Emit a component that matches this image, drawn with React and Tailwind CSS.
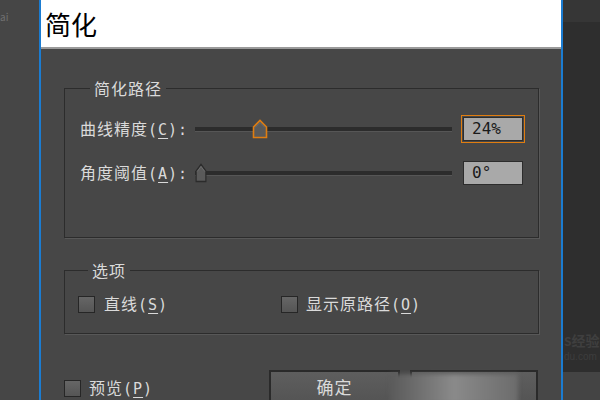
import React from "react";

const cjk = { fontFamily: '"Noto Sans CJK SC", "Noto Sans", sans-serif' };
const mono = { fontFamily: '"DejaVu Sans Mono", "Liberation Mono", monospace' };

function Thumb({ active, w = 16 }) {
  return (
    <svg width={w} height="20" viewBox="0 0 16 20" preserveAspectRatio="none" className="block">
      <path
        d="M1.5 8 L8 1.5 L14.5 8 L14.5 18.5 L1.5 18.5 Z"
        fill="#5a5a5a"
        stroke={active ? "#e07d10" : "#2b2b2b"}
        strokeWidth="1.6"
      />
      <path d="M3 8.5 L8 3.5 L13 8.5" fill="none" stroke="#6e6e6e" strokeWidth="1" />
    </svg>
  );
}

function Slider({ pos, active, w }) {
  return (
    <div className="relative w-[257px] h-[28px] flex items-center">
      <div className="w-full h-[5px] bg-[#2c2c2c] border-b border-[#565656]" />
      <div className="absolute top-[4px]" style={{ left: pos }}>
        <Thumb active={active} w={w} />
      </div>
    </div>
  );
}

function ValueBox({ value, focused }) {
  return (
    <div
      className={`w-[64px] h-[28px] p-[1px] ${
        focused ? "border border-[#e07d10]" : "border border-transparent"
      }`}
    >
      <div
        className="w-full h-full bg-[#a9a9a9] border border-[#2c2c2c] flex items-center pl-[8px] text-[16px] text-[#1a1a1a]"
        style={mono}
      >
        {value}
      </div>
    </div>
  );
}

function Check() {
  return (
    <div className="w-[17px] h-[17px] border border-[#262626] bg-gradient-to-b from-[#666] to-[#555] shrink-0" />
  );
}

function Key({ k, colon }) {
  return (
    <span style={mono} className="text-[15px]">
      (<span className="underline underline-offset-[3px]">{k}</span>){colon ? ":" : ""}
    </span>
  );
}

export default function App() {
  return (
    <div
      className="w-[600px] h-[400px] flex bg-[#464646] overflow-hidden text-[#dadada]"
      style={cjk}
    >
      {/* left workspace strip */}
      <div className="w-[39px] shrink-0">
        <div className="text-[10px] text-[#707070] mt-[9px] ml-0">ai</div>
      </div>
      <div className="w-[2px] shrink-0 bg-[#1b7cd1]" />

      {/* dialog */}
      <div className="w-[520px] shrink-0 flex flex-col bg-[#474747]">
        <div className="h-[49px] shrink-0 bg-white border-b-2 border-[#9a9a9a] flex items-center pl-[4px] pt-[1px]">
          <span className="text-[26px] leading-none text-black">简化</span>
        </div>

        <div className="pl-[23px] pr-[22px] pt-[29px]">
          <fieldset className="border border-[#2c2c2c] shadow-[1px_1px_0_#585858] h-[160px] pl-[15px] pr-[13px] pt-[17px]">
            <legend className="ml-[10px] px-[4px] text-[16px] leading-[20px] tracking-[1px]">简化路径</legend>
            <div className="flex items-center h-[28px]">
              <div className="w-[115px] text-[16px] leading-none tracking-[1px] whitespace-nowrap">
                曲线精度<Key k="C" colon />
              </div>
              <Slider pos={57} active />
              <div className="ml-[9px]">
                <ValueBox value="24%" focused />
              </div>
            </div>
            <div className="flex items-center h-[28px] mt-[16px]">
              <div className="w-[115px] text-[16px] leading-none tracking-[1px] whitespace-nowrap">
                角度阈值<Key k="A" colon />
              </div>
              <Slider pos={0} w={12} />
              <div className="ml-[9px]">
                <ValueBox value="0°" />
              </div>
            </div>
          </fieldset>

          <fieldset className="mt-[22px] border border-[#2c2c2c] shadow-[1px_1px_0_#585858] h-[74px] pl-[13px] pt-[14px]">
            <legend className="ml-[10px] px-[4px] text-[16px] leading-[20px] tracking-[1px]">选项</legend>
            <div className="flex items-center h-[20px]">
              <div className="flex items-center gap-[9px] w-[203px]">
                <Check />
                <span className="text-[16px] leading-none tracking-[1px] whitespace-nowrap">
                  直线<Key k="S" />
                </span>
              </div>
              <div className="flex items-center gap-[8px]">
                <Check />
                <span className="text-[16px] leading-none tracking-[1px] whitespace-nowrap">
                  显示原路径<Key k="O" />
                </span>
              </div>
            </div>
          </fieldset>

          <div className="relative flex items-start mt-[36px]">
            <div className="flex items-center gap-[8px] mt-[9px] w-[205px]">
              <Check />
              <span className="text-[16px] leading-none tracking-[1px] whitespace-nowrap">
                预览<Key k="P" />
              </span>
            </div>
            <div className="w-[131px] h-[34px] border-2 border-[#2a2a2a] bg-gradient-to-b from-[#5e5e5e] to-[#545454] flex items-start justify-center pt-[6px] text-[17px] leading-none tracking-[1px]">
              确定
            </div>
            <div className="ml-[10px] w-[128px] h-[34px] border-2 border-[#2a2a2a] bg-gradient-to-b from-[#5e5e5e] to-[#545454]" />
            <div className="absolute left-[326px] top-[4px] w-[128px] h-[30px] bg-gradient-to-r from-[#5a5a5a] via-[#8a8a8a] to-[#6c6c6c] blur-[2px]" />
          </div>
        </div>
      </div>
      <div className="w-[2px] shrink-0 bg-[#1b7cd1]" />

      {/* right workspace strip */}
      <div className="flex-1 flex flex-col">
        <div className="h-[22px] bg-[#363636]" />
        <div className="h-[350px] bg-[#2e2e2e] flex flex-col justify-end pb-[10px] pl-[1px]">
          <div className="text-[14px] leading-none text-[#3f3f3f] font-bold">
            <span className="text-[12px]">S</span>经验
          </div>
          <div className="text-[10px] leading-none mt-[5px] text-[#3d3d3d]" style={{ fontFamily: '"Liberation Sans", sans-serif' }}>
            du.com
          </div>
        </div>
        <div className="flex-1 bg-[#444444]" />
      </div>
    </div>
  );
}
